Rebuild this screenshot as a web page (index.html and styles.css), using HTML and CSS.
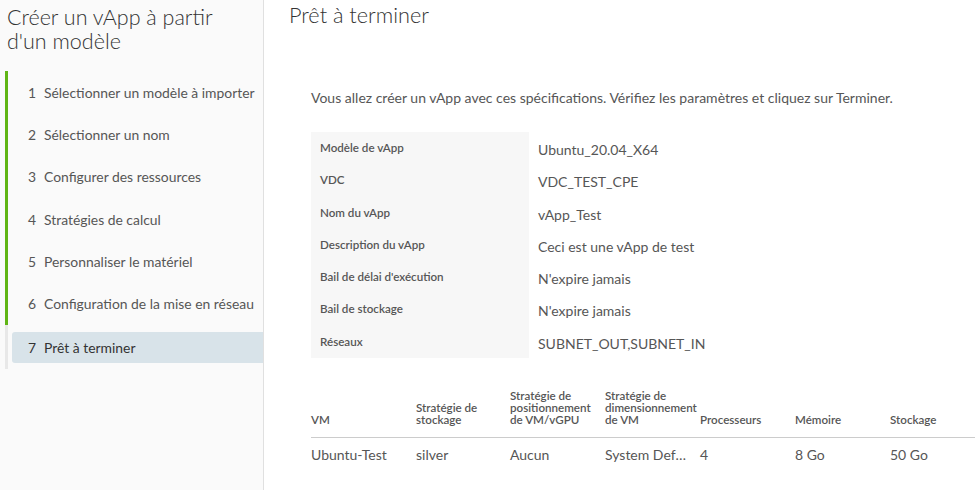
FILE: index.html
```html
<!DOCTYPE html>
<html lang="fr">
<head>
    <meta charset="UTF-8">
    <title>Créer un vApp à partir d'un modèle</title>
    <link rel="stylesheet" href="styles.css">
</head>
<body>

<div class="wizard">
    <!-- Étapes -->
    <nav class="sidebar">
        <h2 class="wizard-title">Créer un vApp à partir d'un modèle</h2>
        <ul class="steps">
            <li class="step done"><span class="num">1</span>Sélectionner un modèle à importer</li>
            <li class="step done"><span class="num">2</span>Sélectionner un nom</li>
            <li class="step done"><span class="num">3</span>Configurer des ressources</li>
            <li class="step done"><span class="num">4</span>Stratégies de calcul</li>
            <li class="step done"><span class="num">5</span>Personnaliser le matériel</li>
            <li class="step done"><span class="num">6</span>Configuration de la mise en réseau</li>
            <li class="step current"><span class="num">7</span>Prêt à terminer</li>
        </ul>
    </nav>

    <!-- Contenu -->
    <main class="content">
        <h3 class="page-title">Prêt à terminer</h3>
        <div class="summary">
            <p class="intro">Vous allez créer un vApp avec ces spécifications. Vérifiez les paramètres et cliquez sur Terminer.</p>

            <dl class="specs">
                <dt>Modèle de vApp</dt><dd>Ubuntu_20.04_X64</dd>
                <dt>VDC</dt><dd>VDC_TEST_CPE</dd>
                <dt>Nom du vApp</dt><dd>vApp_Test</dd>
                <dt>Description du vApp</dt><dd>Ceci est une vApp de test</dd>
                <dt>Bail de délai d'exécution</dt><dd>N'expire jamais</dd>
                <dt>Bail de stockage</dt><dd>N'expire jamais</dd>
                <dt>Réseaux</dt><dd>SUBNET_OUT,SUBNET_IN</dd>
            </dl>

            <table class="vm-table">
                <thead>
                    <tr>
                        <th class="col-vm">VM</th>
                        <th class="col-sto">Stratégie de stockage</th>
                        <th>Stratégie de positionnement de VM/vGPU</th>
                        <th>Stratégie de dimensionnement de VM</th>
                        <th>Processeurs</th>
                        <th>Mémoire</th>
                        <th class="col-last">Stockage</th>
                    </tr>
                </thead>
                <tbody>
                    <tr>
                        <td>Ubuntu-Test</td>
                        <td>silver</td>
                        <td>Aucun</td>
                        <td class="ellipsis">System Default</td>
                        <td>4</td>
                        <td>8 Go</td>
                        <td>50 Go</td>
                    </tr>
                </tbody>
            </table>
        </div>
    </main>
</div>

</body>
</html>
```

FILE: styles.css
```css
body {
    margin: 0;
    font-family: 'Lato', 'Noto Sans', sans-serif;
    color: #565656;
    background-color: white;
}

.wizard {
    display: flex;
    height: 490px;
    overflow: hidden;
}

.sidebar {
    width: 263px;
    flex-shrink: 0;
    background-color: #fafafa;
    border-right: 1px solid #e0e0e0;
}

.wizard-title {
    margin: 0;
    padding: 5px 24px 0 7px;
    font-size: 21.5px;
    font-weight: 300;
    line-height: 24px;
    color: #333;
}

.steps {
    list-style: none;
    margin: 18px 0 0 5px;
    padding: 0;
    border-left: 3px solid #e8e8e8;
    padding-bottom: 6px;
}

.step {
    display: flex;
    align-items: center;
    height: 42.3px;
    font-size: 13.9px;
    padding-left: 20px;
    margin-left: -3px;
    border-left: 3px solid transparent;
}

.step.done {
    border-left-color: #60b515;
}

.step .num {
    width: 16px;
}

.step.current {
    height: 31px;
    margin: 7px 0 0 4px;
    padding-left: 16px;
    border-left: none;
    background-color: #d8e3e9;
    border-radius: 3px 0 0 3px;
    color: #333;
}

.content {
    flex: 1;
    padding-left: 25px;
}

.page-title {
    margin: 0;
    padding-top: 3px;
    font-size: 21.7px;
    font-weight: 300;
    line-height: 24px;
    color: #333;
}

.summary {
    padding-left: 22px;
}

.intro {
    margin: 62px 0 25px;
    font-size: 14px;
    line-height: 18px;
}

.specs {
    display: grid;
    grid-template-columns: 218px auto;
    grid-auto-rows: 32.3px;
    margin: 0 0 32px;
}

.specs dt {
    background-color: #f7f7f7;
    padding: 9px 0 0 9px;
    font-size: 11.6px;
    font-weight: 600;
}

.specs dd {
    margin: 0;
    padding: 9px 0 0 9px;
    font-size: 14px;
}

.vm-table {
    border-collapse: collapse;
    width: 664px;
    table-layout: fixed;
}

.vm-table th {
    box-sizing: border-box;
    width: 95px;
    text-align: left;
    vertical-align: bottom;
    font-size: 11.6px;
    font-weight: 600;
    line-height: 12px;
    padding: 0 8px 11px 0;
    border-bottom: 1px solid #ccc;
}

.vm-table th.col-vm {
    width: 105px;
}

.vm-table th.col-sto {
    width: 94px;
}

.vm-table th.col-last {
    width: 85px;
}

.vm-table td {
    font-size: 14px;
    padding: 8px 0;
    white-space: nowrap;
}

.vm-table td.ellipsis {
    overflow: hidden;
    text-overflow: ellipsis;
    padding-right: 11px;
}
```
